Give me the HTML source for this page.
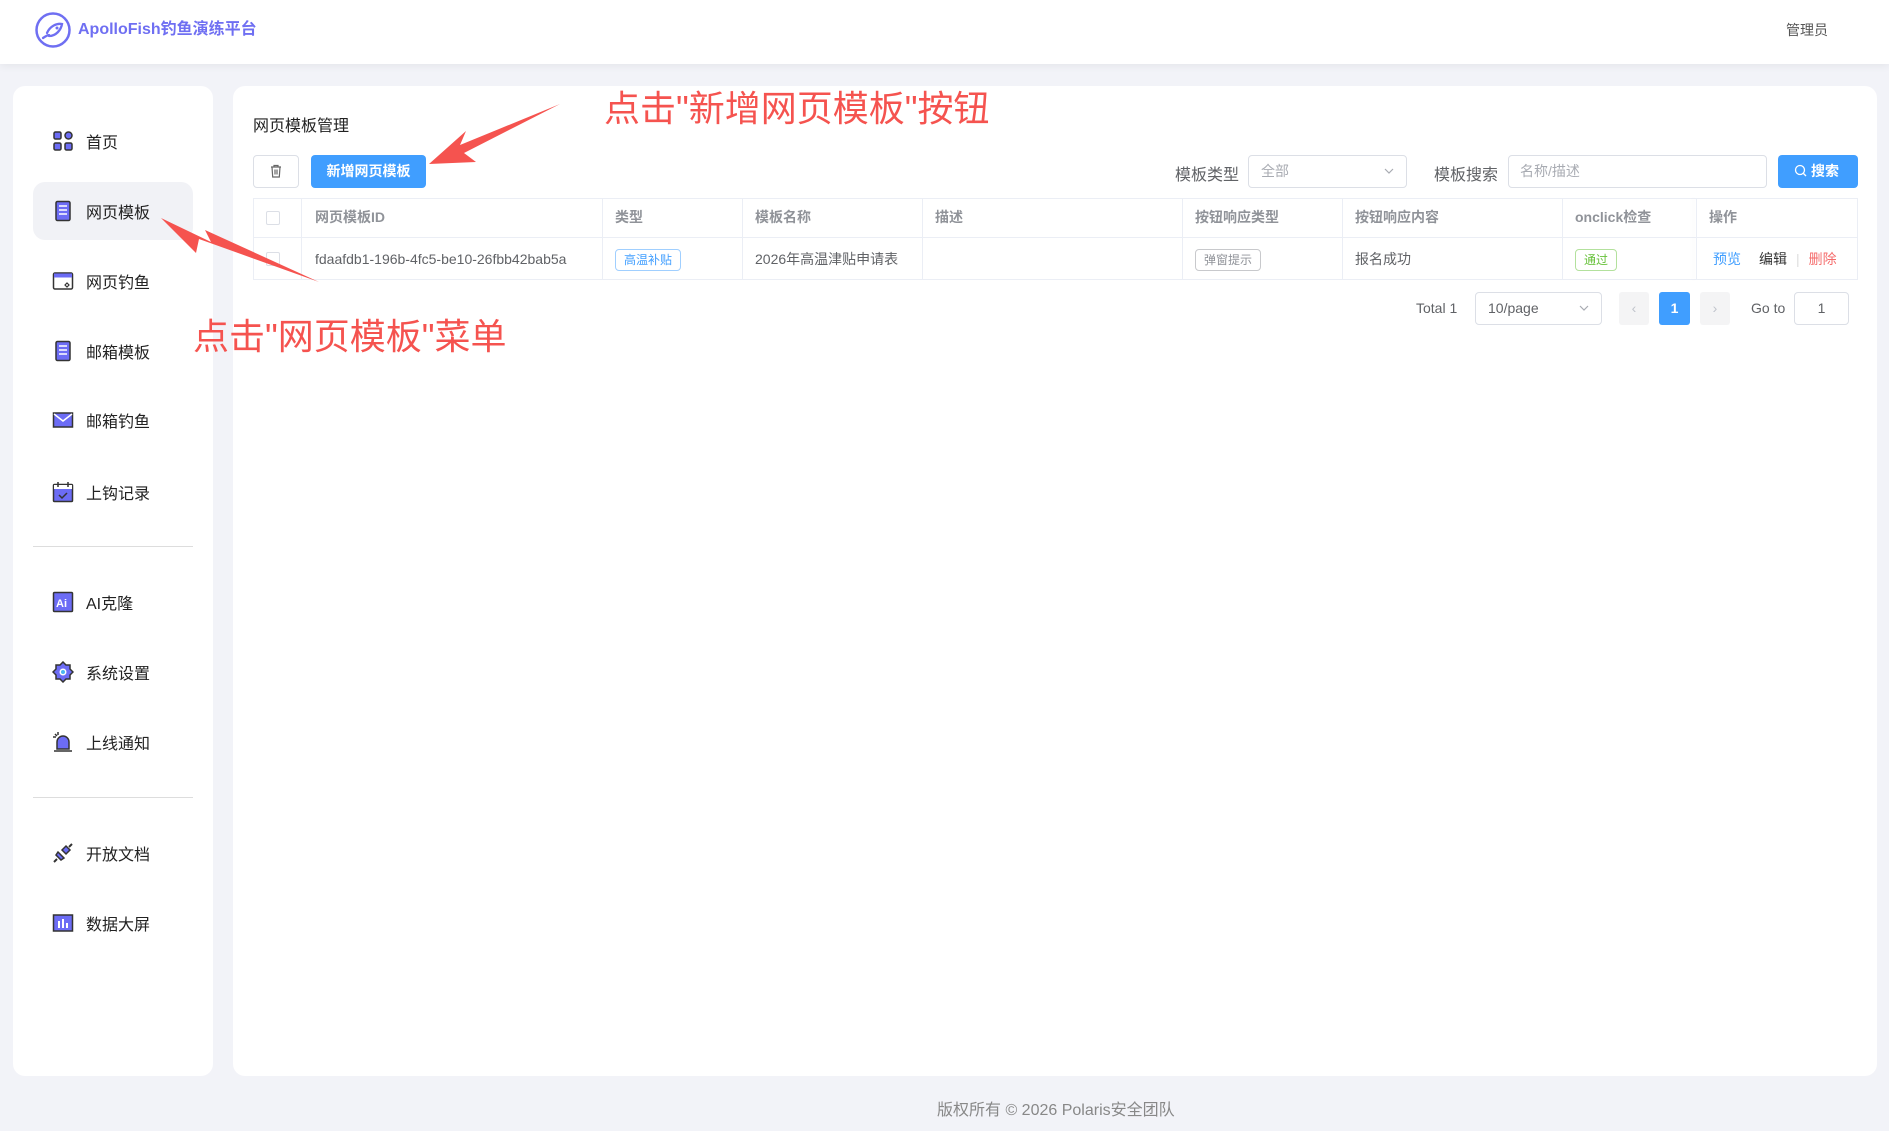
<!DOCTYPE html>
<html><head><meta charset="utf-8"><style>
*{box-sizing:border-box;margin:0;padding:0}
body{width:1889px;height:1131px;background:#f2f3f8;font-family:"Liberation Sans","Noto Sans CJK SC",sans-serif;position:relative;overflow:hidden;color:#333}
.a{position:absolute}
.hdr{left:0;top:0;width:1889px;height:64px;background:#fff;box-shadow:0 2px 8px rgba(0,0,0,.06)}
.card{background:#fff;border-radius:12px}
.mi{position:absolute;left:52px;font-size:16px;color:#222;display:flex;align-items:center;height:24px}
.mi svg{width:22px;height:22px;margin-right:12px}
.th{position:absolute;top:198px;height:39px;line-height:39px;font-size:14px;color:#909399;font-weight:bold}
.td{position:absolute;top:237px;height:43px;line-height:43px;font-size:14px;color:#606266}
.vl{position:absolute;top:198px;width:1px;height:82px;background:#ebeef5}
.tag{display:inline-block;border:1px solid;border-radius:4px;font-size:12px;line-height:20px;padding:0 8px}
.red{color:#f5534f;font-size:36px;position:absolute;white-space:nowrap}
.chev{position:absolute;right:12px;top:12px}
</style></head><body>
<div class="a hdr"></div>
<svg class="a" style="left:34px;top:11px" width="38" height="38" viewBox="0 0 38 38"><circle cx="19" cy="19" r="16.5" fill="none" stroke="#6f6ff2" stroke-width="2.5"/><path d="M9 27c3-2 5-3 6-3M13 22c3-7 10-10 15-9-1 6-6 12-13 12" fill="none" stroke="#6f6ff2" stroke-width="2.3" stroke-linecap="round"/><circle cx="23" cy="17" r="1.5" fill="#6f6ff2"/></svg>
<div class="a" style="left:78px;top:20px;font-size:16px;font-weight:bold;color:#6f6ff2;line-height:20px">ApolloFish钓鱼演练平台</div>
<div class="a" style="left:1786px;top:20px;font-size:14px;color:#555">管理员</div>

<div class="a card" style="left:13px;top:86px;width:200px;height:990px"></div>
<div class="a" style="left:33px;top:182px;width:160px;height:58px;background:#f1f2f6;border-radius:12px"></div>
<div class="a" style="left:33px;top:546px;width:160px;height:1px;background:#ddd"></div>
<div class="a" style="left:33px;top:797px;width:160px;height:1px;background:#ddd"></div>

<div class="mi" style="top:129px;left:52px"><svg viewBox="0 0 22 22"><rect x="2" y="2" width="7" height="7" rx="1.5" fill="#6c6cf5" stroke="#333" stroke-width="1.5"/><circle cx="16.5" cy="5.5" r="3.5" fill="#6c6cf5" stroke="#333" stroke-width="1.5"/><rect x="2" y="13" width="7" height="7" rx="1.5" fill="#6c6cf5" stroke="#333" stroke-width="1.5"/><rect x="13" y="13" width="7" height="7" rx="1.5" fill="#6c6cf5" stroke="#333" stroke-width="1.5"/></svg>首页</div>
<div class="mi" style="top:199px"><svg viewBox="0 0 22 22"><rect x="4" y="1.5" width="14" height="19" rx="1.5" fill="#6c6cf5" stroke="#333" stroke-width="1.5"/><path d="M7 6h8M7 10h8M7 14h8" stroke="#fff" stroke-width="1.5"/></svg>网页模板</div>
<div class="mi" style="top:269px"><svg viewBox="0 0 22 22"><rect x="1.5" y="3" width="19" height="16" rx="1.5" fill="#fff" stroke="#333" stroke-width="1.5"/><rect x="2" y="3.5" width="18" height="4" fill="#6c6cf5"/><path d="M13 15l2-2 2 2-2 2z" fill="none" stroke="#333" stroke-width="1.2"/></svg>网页钓鱼</div>
<div class="mi" style="top:339px"><svg viewBox="0 0 22 22"><rect x="4" y="1.5" width="14" height="19" rx="1.5" fill="#6c6cf5" stroke="#333" stroke-width="1.5"/><path d="M7 6h8M7 10h8M7 14h8" stroke="#fff" stroke-width="1.5"/></svg>邮箱模板</div>
<div class="mi" style="top:408px"><svg viewBox="0 0 22 22"><rect x="1.5" y="4" width="19" height="14" fill="#6c6cf5" stroke="#333" stroke-width="1.5"/><path d="M2 5l9 7 9-7" fill="none" stroke="#fff" stroke-width="1.5"/></svg>邮箱钓鱼</div>
<div class="mi" style="top:480px"><svg viewBox="0 0 22 22"><rect x="1.5" y="3.5" width="19" height="17" rx="1" fill="#6c6cf5" stroke="#333" stroke-width="1.5"/><rect x="2" y="4" width="18" height="4" fill="#fff"/><path d="M6 1v5M16 1v5" stroke="#333" stroke-width="1.5"/><path d="M7 14l3 3 5-5" fill="none" stroke="#333" stroke-width="1.5"/></svg>上钩记录</div>
<div class="mi" style="top:590px"><svg viewBox="0 0 22 22"><rect x="1.5" y="1.5" width="19" height="19" rx="1" fill="#6c6cf5" stroke="#333" stroke-width="1.5"/><text x="4" y="16" font-size="11" font-weight="bold" fill="#fff" font-family="Liberation Sans">Ai</text></svg>AI克隆</div>
<div class="mi" style="top:660px"><svg viewBox="0 0 22 22"><path d="M11 1l3 3h4v4l3 3-3 3v4h-4l-3 3-3-3H4v-4l-3-3 3-3V4h4z" fill="#6c6cf5" stroke="#333" stroke-width="1.5"/><circle cx="11" cy="11" r="3.5" fill="#fff"/><circle cx="11" cy="11" r="2" fill="#4ab8f0"/></svg>系统设置</div>
<div class="mi" style="top:730px"><svg viewBox="0 0 22 22"><path d="M5 18v-7a6 6 0 0 1 12 0v7z" fill="#6c6cf5" stroke="#333" stroke-width="1.5"/><path d="M2 20h18M3 3l2 2M6 1v3M1 6h3" stroke="#333" stroke-width="1.5"/></svg>上线通知</div>
<div class="mi" style="top:841px"><svg viewBox="0 0 22 22"><path d="M6 10l6 6-3 2-5-5z" fill="#6c6cf5" stroke="#333" stroke-width="1.5"/><path d="M10 8l4-4 4 4-4 4z" fill="#6c6cf5" stroke="#333" stroke-width="1.5"/><path d="M2 20l3-3M17 5l3-3" stroke="#333" stroke-width="2"/></svg>开放文档</div>
<div class="mi" style="top:911px"><svg viewBox="0 0 22 22"><rect x="1.5" y="3" width="19" height="16" fill="#6c6cf5" stroke="#333" stroke-width="1.5"/><path d="M7 16V9M11 16V7M15 16v-5" stroke="#fff" stroke-width="2"/></svg>数据大屏</div>

<div class="a card" style="left:233px;top:86px;width:1644px;height:990px"></div>
<div class="a" style="left:253px;top:112px;font-size:16px;color:#222">网页模板管理</div>
<div class="a" style="left:253px;top:155px;width:46px;height:33px;border:1px solid #dcdfe6;border-radius:4px;background:#fff"></div>
<svg class="a" style="left:268px;top:163px" width="16" height="16" viewBox="0 0 16 16"><path d="M3 4h10M6 4V2.5h4V4M4 4l.7 10h6.6L12 4M7 6.5v5M9 6.5v5" fill="none" stroke="#666" stroke-width="1.2"/></svg>
<div class="a" style="left:311px;top:155px;width:115px;height:33px;border-radius:4px;background:#409eff;color:#fff;font-size:14px;font-weight:bold;text-align:center;line-height:33px">新增网页模板</div>

<div class="a" style="left:1175px;top:161px;font-size:16px;color:#606266">模板类型</div>
<div class="a" style="left:1248px;top:155px;width:159px;height:33px;border:1px solid #dcdfe6;border-radius:4px;font-size:14px;color:#a8abb2;line-height:31px;padding-left:12px">全部<svg class="chev" width="10" height="7" viewBox="0 0 10 7"><path d="M1 1l4 4 4-4" fill="none" stroke="#a8abb2" stroke-width="1.2"/></svg></div>
<div class="a" style="left:1434px;top:161px;font-size:16px;color:#606266">模板搜索</div>
<div class="a" style="left:1508px;top:155px;width:259px;height:33px;border:1px solid #dcdfe6;border-radius:4px;font-size:14px;color:#a8abb2;line-height:31px;padding-left:11px">名称/描述</div>
<div class="a" style="left:1778px;top:155px;width:80px;height:33px;border-radius:4px;background:#409eff;color:#fff;font-size:14px;font-weight:bold;line-height:33px;padding-left:16px"><svg width="13" height="13" viewBox="0 0 13 13" style="vertical-align:-1px;margin-right:4px"><circle cx="6" cy="6" r="4.5" fill="none" stroke="#fff" stroke-width="1.3"/><path d="M9.5 9.5l2.5 2.5" stroke="#fff" stroke-width="1.3"/></svg>搜索</div>

<div class="a" style="left:253px;top:198px;width:1605px;height:82px;border:1px solid #ebeef5"></div>
<div class="a" style="left:253px;top:237px;width:1605px;height:1px;background:#ebeef5"></div>
<div class="vl" style="left:301px"></div><div class="vl" style="left:602px"></div><div class="vl" style="left:742px"></div><div class="vl" style="left:922px"></div><div class="vl" style="left:1182px"></div><div class="vl" style="left:1342px"></div><div class="vl" style="left:1562px"></div><div class="vl" style="left:1696px;box-shadow:-3px 0 5px rgba(0,0,0,.06)"></div>
<div class="a" style="left:266px;top:211px;width:14px;height:14px;border:1px solid #dcdfe6;border-radius:2px"></div>
<div class="a" style="left:266px;top:252px;width:14px;height:14px;border:1px solid #dcdfe6;border-radius:2px"></div>
<div class="th" style="left:315px">网页模板ID</div><div class="th" style="left:615px">类型</div><div class="th" style="left:755px">模板名称</div><div class="th" style="left:935px">描述</div><div class="th" style="left:1195px">按钮响应类型</div><div class="th" style="left:1355px">按钮响应内容</div><div class="th" style="left:1575px">onclick检查</div><div class="th" style="left:1709px">操作</div>
<div class="td" style="left:315px;top:238px">fdaafdb1-196b-4fc5-be10-26fbb42bab5a</div>
<div class="td" style="left:615px;top:238px"><span class="tag" style="color:#409eff;border-color:#a0cfff">高温补贴</span></div>
<div class="td" style="left:755px;top:238px">2026年高温津贴申请表</div>
<div class="td" style="left:1195px;top:238px"><span class="tag" style="color:#909399;border-color:#c8c9cc">弹窗提示</span></div>
<div class="td" style="left:1355px;top:238px">报名成功</div>
<div class="td" style="left:1575px;top:238px"><span class="tag" style="color:#67c23a;border-color:#b3e19d">通过</span></div>
<div class="td" style="left:1713px;top:238px"><span style="color:#409eff">预览</span><span style="color:#333;margin-left:18px">编辑</span><span style="color:#ddd;margin:0 9px">|</span><span style="color:#f56c6c">删除</span></div>

<div class="a" style="left:1416px;top:300px;font-size:14px;color:#606266">Total 1</div>
<div class="a" style="left:1475px;top:292px;width:127px;height:33px;border:1px solid #dcdfe6;border-radius:4px;font-size:14px;color:#606266;line-height:31px;padding-left:12px">10/page<svg class="chev" width="10" height="7" viewBox="0 0 10 7"><path d="M1 1l4 4 4-4" fill="none" stroke="#a8abb2" stroke-width="1.2"/></svg></div>
<div class="a" style="left:1619px;top:292px;width:30px;height:33px;background:#f4f4f5;border-radius:3px;color:#c0c4cc;text-align:center;line-height:33px;font-size:14px">‹</div>
<div class="a" style="left:1659px;top:292px;width:31px;height:33px;background:#409eff;border-radius:3px;color:#fff;text-align:center;line-height:33px;font-size:14px;font-weight:bold">1</div>
<div class="a" style="left:1700px;top:292px;width:30px;height:33px;background:#f4f4f5;border-radius:3px;color:#c0c4cc;text-align:center;line-height:33px;font-size:14px">›</div>
<div class="a" style="left:1751px;top:300px;font-size:14px;color:#606266">Go to</div>
<div class="a" style="left:1794px;top:292px;width:55px;height:33px;border:1px solid #dcdfe6;border-radius:4px;font-size:14px;color:#606266;line-height:31px;text-align:center">1</div>

<div class="a" style="left:937px;top:1096px;font-size:16px;color:#888">版权所有 © 2026 Polaris安全团队</div>

<div class="red" style="left:604px;top:80px">点击"新增网页模板"按钮</div>
<div class="red" style="left:193px;top:308px">点击"网页模板"菜单</div>
<svg class="a" style="left:0;top:0" width="700" height="320" viewBox="0 0 700 320">
<path d="M560 104L460 145 466 131 429 164 476 162 464 153z" fill="#f5534f"/>
<path d="M319 282L205 230 211 242 161 218 196 253 199 239z" fill="#f5534f"/>
</svg>
</body></html>
